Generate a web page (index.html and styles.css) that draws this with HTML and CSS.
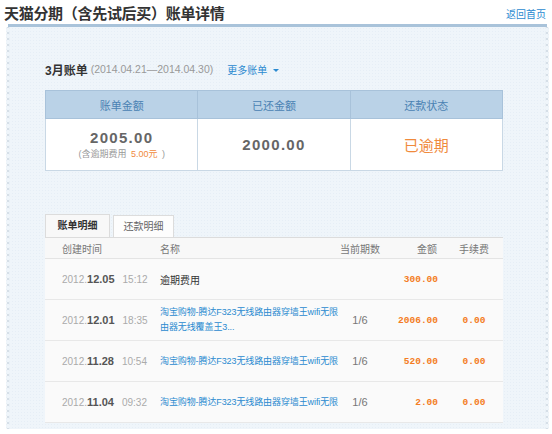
FILE: index.html
```html
<!DOCTYPE html>
<html lang="zh-CN">

<head>
  <meta charset="UTF-8">
  <meta name="viewport" content="width=device-width, initial-scale=1.0">
  <title>账单详情</title>

  <link rel="stylesheet" href="styles.css">
</head>

<body>
  <header class="page-head">
    <h1>天猫分期（含先试后买）账单详情</h1>
    <a href="#" class="back">返回首页</a>
  </header>

  <section class="panel">
    <div class="bill-title">
      <strong>3月账单</strong>
      <span class="range">(2014.04.21—2014.04.30)</span>
      <a href="#" class="more">更多账单 <i class="caret"></i></a>
    </div>

    <table class="summary">
      <tr>
        <th scope="col">账单金额</th>
        <th scope="col">已还金额</th>
        <th scope="col">还款状态</th>
      </tr>
      <tr>
        <td>
          <div class="sum">2005.00</div>
          <div class="note">(含逾期费用 <em>5.00元</em> )</div>
        </td>
        <td><div class="sum">2000.00</div></td>
        <td><div class="status">已逾期</div></td>
      </tr>
    </table>

    <div class="tabs">
      <a href="#" class="tab on">账单明细</a>
      <a href="#" class="tab">还款明细</a>
    </div>

    <table class="detail">
      <colgroup>
        <col class="c-time">
        <col class="c-name">
        <col class="c-term">
        <col class="c-amount">
        <col class="c-fee">
      </colgroup>
      <tr>
        <th scope="col" class="time">创建时间</th>
        <th scope="col" class="name">名称</th>
        <th scope="col" class="term">当前期数</th>
        <th scope="col" class="amount">金额</th>
        <th scope="col" class="fee">手续费</th>
      </tr>
      <tr>
        <td class="time">2012.<b>12.05</b><span>15:12</span></td>
        <td class="name"><span class="plain">逾期费用</span></td>
        <td class="term"></td>
        <td class="amount">300.00</td>
        <td class="fee"></td>
      </tr>
      <tr>
        <td class="time">2012.<b>12.01</b><span>18:35</span></td>
        <td class="name"><a href="#">淘宝购物-腾达F323无线路由器穿墙王wifi无限<br>由器无线覆盖王3...</a></td>
        <td class="term">1/6</td>
        <td class="amount">2006.00</td>
        <td class="fee">0.00</td>
      </tr>
      <tr>
        <td class="time">2012.<b>11.28</b><span>10:54</span></td>
        <td class="name"><a href="#">淘宝购物-腾达F323无线路由器穿墙王wifi无限</a></td>
        <td class="term">1/6</td>
        <td class="amount">520.00</td>
        <td class="fee">0.00</td>
      </tr>
      <tr>
        <td class="time">2012.<b>11.04</b><span>09:32</span></td>
        <td class="name"><a href="#">淘宝购物-腾达F323无线路由器穿墙王wifi无限</a></td>
        <td class="term">1/6</td>
        <td class="amount">2.00</td>
        <td class="fee">0.00</td>
      </tr>
    </table>
  </section>
</body>

</html>
```

FILE: styles.css
```css
body {
  margin: 0;
  background: #fff;
  font-family: "Liberation Sans", "Noto Sans CJK SC", sans-serif;
  color: #333;
}

a {
  text-decoration: none;
}

/* 页面标题 */
.page-head {
  display: flex;
  justify-content: space-between;
  align-items: center;
  height: 24px;
  padding: 0 6px 0 4px;
}

.page-head h1 {
  margin: 0;
  font-size: 15px;
  font-weight: bold;
  letter-spacing: -0.3px;
  color: #333;
}

.back {
  font-size: 10px;
  color: #2b8ad0;
  margin-top: 2px;
}

/* 带锯齿边的主面板 */
.panel {
  position: relative;
  margin: 0 5px 0 8px;
  padding: 32px 44px 6px 37px;
  border-top: 3px solid #a9c3da;
  background-color: #eff5fa;
  background-image: radial-gradient(circle, #e6eef6 0.7px, transparent 1px);
  background-size: 3px 3px;
}

.panel::before,
.panel::after {
  content: "";
  position: absolute;
  top: 0;
  bottom: 0;
  width: 4px;
  background: radial-gradient(circle at 2px 3px, #eff5fa 2px, #d3dde6 2.6px, transparent 3px);
  background-size: 4px 6px;
}

.panel::before {
  left: -2px;
}

.panel::after {
  right: -2px;
}

.bill-title {
  height: 20px;
  display: flex;
  align-items: center;
  font-size: 10.5px;
}

.bill-title strong {
  font-size: 12px;
  color: #333;
}

.range {
  color: #999;
  margin-left: 3px;
}

.more {
  margin-left: 14px;
  font-size: 10px;
  color: #2b8ad0;
}

.caret {
  display: inline-block;
  margin-left: 3px;
  vertical-align: middle;
  border: 3px solid transparent;
  border-top-color: #2b8ad0;
  border-bottom: 0;
}

/* 账单概要 */
.summary {
  width: 100%;
  margin-top: 11px;
  border-collapse: collapse;
  table-layout: fixed;
  text-align: center;
  background: #fff;
}

.summary th {
  height: 27px;
  padding: 0;
  background: #bad2e7;
  border: 1px solid #a8c2da;
  font-size: 11px;
  font-weight: normal;
  color: #4b82b3;
}

.summary td {
  height: 51px;
  padding: 0;
  border: 1px solid #c9d8e5;
}

.sum {
  font-size: 15px;
  line-height: 18px;
  font-weight: bold;
  letter-spacing: 1.3px;
  color: #666;
}

.note {
  font-size: 9px;
  color: #999;
}

.note em {
  font-style: normal;
  color: #f08a3c;
  margin: 0 2px;
}

.status {
  font-size: 15px;
  color: #f08a3c;
}

/* 标签页 */
.tabs {
  display: flex;
  gap: 3px;
  margin-top: 43px;
  align-items: flex-end;
}

.tab {
  width: 59px;
  height: 21px;
  line-height: 21px;
  text-align: center;
  border: 1px solid #dcdcdc;
  border-bottom: 0;
  font-size: 10px;
  color: #666;
  background: #fdfdfd;
}

.tab.on {
  width: 63px;
  height: 22px;
  line-height: 22px;
  font-weight: bold;
  color: #333;
  background: #f8f8f8;
}

/* 明细表 */
.detail {
  width: 100%;
  border-collapse: collapse;
  table-layout: fixed;
  background: #fafafa;
}

.c-time { width: 110px; }
.c-term { width: 40px; }
.c-amount { width: 65px; }
.c-fee { width: 58px; }

.detail th {
  height: 20px;
  padding: 0;
  border-top: 1px solid #dcdcdc;
  border-bottom: 1px solid #e4e4e4;
  background: #f8f8f8;
  font-size: 10px;
  font-weight: normal;
  color: #777;
  text-align: left;
}

.detail td {
  height: 40px;
  padding: 0;
  border-bottom: 1px solid #e8e8e8;
  font-size: 10px;
  color: #aaa;
}

.detail .time {
  padding-left: 17px;
}

.detail td.time b {
  color: #555;
  font-size: 11px;
}

.detail td.time span {
  margin-left: 8px;
}

.detail .name {
  padding-left: 5px;
}

.detail .name a {
  display: block;
  white-space: nowrap;
  overflow: hidden;
  font-size: 9px;
  letter-spacing: -0.1px;
  color: #2b8ad0;
  line-height: 15px;
}

.plain {
  color: #333;
}

.detail .term,
.detail .fee {
  text-align: center;
}

.detail td.term {
  color: #777;
  font-size: 11px;
}

.detail th.amount {
  text-align: right;
  padding-right: 8px;
}

.detail td.amount {
  text-align: right;
  padding-right: 7px;
}

.detail td.amount,
.detail td.fee {
  font-family: "Liberation Mono", "DejaVu Sans Mono", monospace;
  font-size: 9.5px;
  font-weight: bold;
  color: #f47c22;
}
```
